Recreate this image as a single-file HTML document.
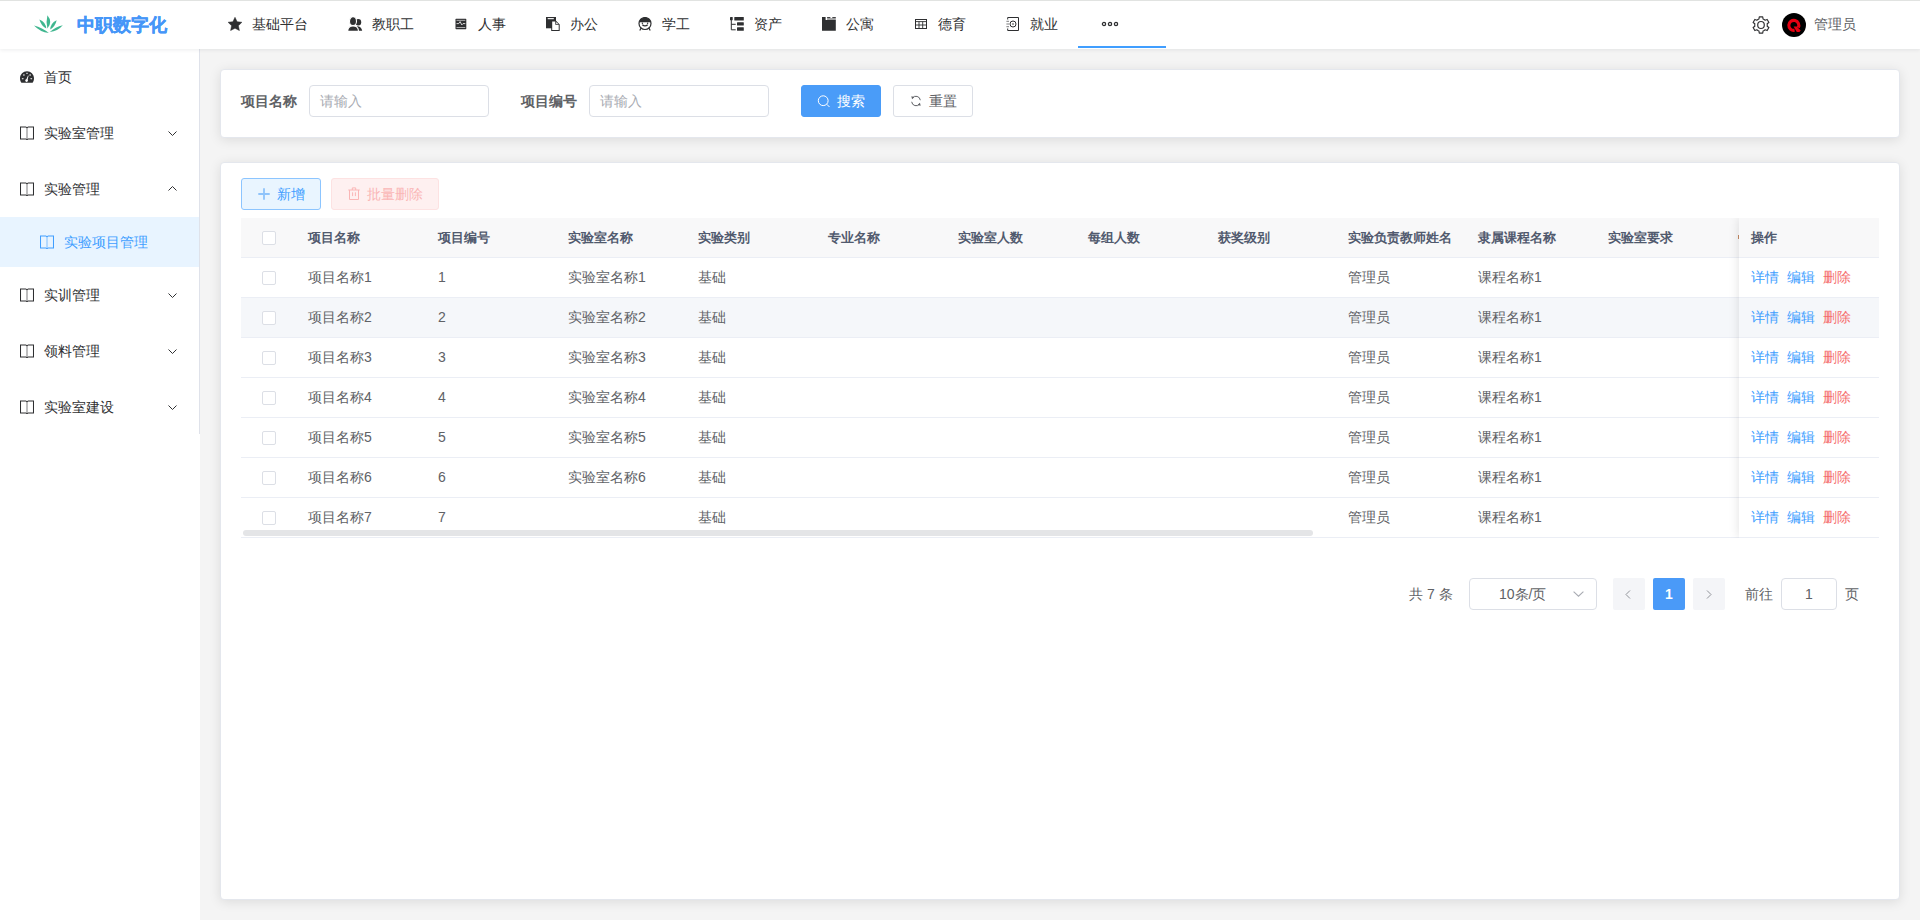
<!DOCTYPE html><html><head><meta charset="utf-8"><style>
*{box-sizing:border-box;margin:0;padding:0}
html,body{width:1920px;height:920px;overflow:hidden;background:#fff;font-family:"Liberation Sans",sans-serif;font-size:14px;color:#606266}
.abs{position:absolute}
.t{position:absolute;white-space:nowrap;line-height:20px}
#top{position:absolute;left:0;top:0;width:1920px;height:49px;background:#fff;border-top:1px solid #e1e3e1;box-shadow:0 1px 4px rgba(0,21,41,.08);z-index:5}
#side{position:absolute;left:0;top:49px;width:200px;height:871px;background:#fff;z-index:3}
#main{position:absolute;left:200px;top:49px;width:1720px;height:871px;background:#f4f4f4}
.card{position:absolute;background:#fff;border:1px solid #e4e7ed;border-radius:4px;box-shadow:0 2px 12px 0 rgba(0,0,0,.1)}
.inp{position:absolute;height:32px;border:1px solid #dcdfe6;border-radius:4px;background:#fff}
.btn{position:absolute;height:32px;border-radius:3px;border:1px solid #dcdfe6;background:#fff}
.th{position:absolute;font-size:13px;font-weight:bold;color:#515a6e;white-space:nowrap;line-height:20px}
.td{position:absolute;font-size:14px;color:#606266;white-space:nowrap;line-height:20px}
.cb{position:absolute;width:14px;height:14px;border:1px solid #dcdfe6;border-radius:2px;background:#fff}
.lnk{position:absolute;font-size:14px;white-space:nowrap;line-height:20px}
</style></head><body>
<div id="top">
<svg class="abs" style="left:0;top:-1px" width="80" height="49" viewBox="0 0 80 49"><g fill="#3fb68f"><path d="M47.40 28.60Q53.00 21.95 47.40 15.30Q45.80 21.95 47.40 28.60z"/><path d="M46.30 28.60Q45.73 21.84 39.40 19.40Q40.93 25.44 46.30 28.60z"/><path d="M50.20 29.60Q55.34 26.21 56.70 20.20Q50.57 22.91 50.20 29.60z"/><path d="M48.80 33.00Q42.31 27.42 34.00 25.40Q40.03 31.87 48.80 33.00z"/><path d="M49.80 32.00Q57.69 31.26 62.80 25.20Q55.37 26.83 49.80 32.00z"/></g></svg>
<div class="t" style="left:77px;top:13px;font-size:18px;font-weight:bold;color:#4596f8;line-height:22px;-webkit-text-stroke:0.35px #4596f8">中职数字化</div>
<svg class="abs" style="left:228px;top:16px" width="14" height="14" viewBox="0 0 14 14"><path fill="#2e2f31" stroke="#2e2f31" stroke-width="0.5" stroke-linejoin="round" d="M7.00 0.3L9.12 4.69L13.9 5.25L10.42 8.71L11.4 13.6L7.00 11.20L2.6 13.6L3.58 8.71L0.1 5.25L4.88 4.69z"/></svg>
<div class="t" style="left:252px;top:13px;color:#303133">基础平台</div>
<svg class="abs" style="left:348px;top:16px" width="15" height="14" viewBox="0 0 15 14"><g fill="#2e2f31"><ellipse cx="10.3" cy="5.2" rx="2.9" ry="3.3"/><path d="M9 9.2c3 0 4.8 1.8 5.2 4.6H10z"/></g><g fill="#2e2f31" stroke="#fff" stroke-width="1.1"><ellipse cx="5" cy="4.2" rx="3.5" ry="4.4"/><path d="M-0.3 14.4c0-3.4 1.9-5.4 5.3-5.4s5.5 2 5.5 5.4z"/></g></svg>
<div class="t" style="left:372px;top:13px;color:#303133">教职工</div>
<svg class="abs" style="left:455px;top:17px" width="12" height="12" viewBox="0 0 12 12"><rect x="0.5" y="0.8" width="10.8" height="10.4" rx="0.6" fill="#2e2f31"/><rect x="1.5" y="1.9" width="8.8" height="0.7" fill="#fff" opacity=".85"/><rect x="1.5" y="9.3" width="8.8" height="0.7" fill="#fff" opacity=".85"/><path d="M1.5 5.6h2.2l1.4-2 1.7 3.3 1.2-1.3h2.3" stroke="#fff" stroke-width="0.8" fill="none"/></svg>
<div class="t" style="left:478px;top:13px;color:#303133">人事</div>
<svg class="abs" style="left:546px;top:16px" width="14" height="14" viewBox="0 0 14 14"><path fill="#2e2f31" d="M0 0h10v11.3H0z"/><rect x="1.7" y="1.1" width="6.1" height="1.1" fill="#fff"/><path d="M5.2 3.6h4.6l3.9 3.9v6.4H5.2z" fill="#2e2f31"/><path d="M6.2 4.6h3.1v3.1h3.4v5.2H6.2z" fill="#fff"/><path d="M10.2 5.1l2 2h-2z" fill="#fff"/></svg>
<div class="t" style="left:570px;top:13px;color:#303133">办公</div>
<svg class="abs" style="left:638px;top:16px" width="14" height="14" viewBox="0 0 14 14"><g fill="none" stroke="#2e2f31" stroke-width="1.2"><circle cx="7" cy="6.5" rx="6" r="6"/><path d="M4.3 7.8c1.6 1.3 3.8 1.3 5.4 0"/><path d="M3.2 10.8L1.8 13.5M10.8 10.8l1.4 2.7"/></g><path d="M1.2 5.2a6 6 0 0 1 11.6 0z" fill="#2e2f31"/><circle cx="4.4" cy="6.2" r="0.7" fill="#2e2f31"/><circle cx="9.6" cy="6.2" r="0.7" fill="#2e2f31"/></svg>
<div class="t" style="left:662px;top:13px;color:#303133">学工</div>
<svg class="abs" style="left:730px;top:16px" width="14" height="14" viewBox="0 0 14 14"><g fill="#2e2f31"><rect x="0" y="0" width="2.7" height="3.3" rx="0.6"/><rect x="4.3" y="0.1" width="9.5" height="3.4" rx="0.5"/><rect x="7" y="5.2" width="6.8" height="3.3" rx="0.5"/><rect x="7" y="10.3" width="6.8" height="3.4" rx="0.5"/></g><path d="M1.3 3v9.8h4.4M1.3 7.3h4.4" stroke="#2e2f31" stroke-width="1" fill="none"/></svg>
<div class="t" style="left:754px;top:13px;color:#303133">资产</div>
<svg class="abs" style="left:822px;top:16px" width="14" height="14" viewBox="0 0 14 14"><path fill="#2e2f31" d="M0 0.1h3.6v3h10.2v10.6H0z"/><rect x="5.1" y="0.1" width="3.3" height="1" fill="#2e2f31"/><rect x="10.3" y="0.1" width="3.5" height="1" fill="#2e2f31"/><rect x="5.1" y="1.1" width="8.7" height="2" fill="#2e2f31" opacity=".45"/></svg>
<div class="t" style="left:846px;top:13px;color:#303133">公寓</div>
<svg class="abs" style="left:915px;top:18px" width="12" height="10" viewBox="0 0 12 10"><g fill="none" stroke="#2e2f31" stroke-width="1"><rect x="0.5" y="0.5" width="11" height="9"/><path d="M0.5 2.6h11M0.5 6h11M4 2.6v7M7.7 2.6v7" stroke-width="0.9"/></g></svg>
<div class="t" style="left:938px;top:13px;color:#303133">德育</div>
<svg class="abs" style="left:1006px;top:16px" width="14" height="14" viewBox="0 0 14 14"><g fill="none" stroke="#2e2f31" stroke-width="1"><path d="M1.7 2.5V0.5h10.8v13H1.7v-2"/><circle cx="7" cy="7" r="3"/><path d="M0.4 4.3h2.6M0.4 7h2.6M0.4 9.7h2.6" stroke-width="0.9" opacity=".7"/></g><circle cx="7" cy="7" r="1" fill="#2e2f31" opacity=".6"/></svg>
<div class="t" style="left:1030px;top:13px;color:#303133">就业</div>
<svg class="abs" style="left:1101px;top:20px" width="18" height="6" viewBox="0 0 18 6"><g fill="none" stroke="#2e2f31" stroke-width="1.3"><circle cx="3" cy="3" r="1.6"/><circle cx="9" cy="3" r="1.6"/><circle cx="15" cy="3" r="1.6"/></g></svg>
<div class="abs" style="left:1078px;top:45px;width:88px;height:2px;background:#409eff"></div>
<svg class="abs" style="left:1752px;top:15px" width="18" height="18" viewBox="0 0 18 18"><path fill="none" stroke="#303133" stroke-width="1.15" stroke-linejoin="round" d="M5.85 3.54L6.95 3.04L7.27 0.88L10.73 0.88L11.05 3.04L12.15 3.54L13.13 4.25L15.17 3.45L16.89 6.44L15.18 7.80L15.30 9.00L15.18 10.20L16.89 11.56L15.17 14.55L13.13 13.75L12.15 14.46L11.05 14.96L10.73 17.12L7.27 17.12L6.95 14.96L5.85 14.46L4.87 13.75L2.83 14.55L1.11 11.56L2.82 10.20L2.70 9.00L2.82 7.80L1.11 6.44L2.83 3.45L4.87 4.25z"/><ellipse cx="9" cy="9" rx="3.3" ry="3.5" fill="none" stroke="#303133" stroke-width="1.2"/></svg>
<svg class="abs" style="left:1782px;top:12px" width="24" height="24" viewBox="0 0 24 24"><circle cx="12" cy="12" r="12" fill="#000"/><path d="M16.3 14.6A5 5 0 1 0 12.6 17.3" fill="none" stroke="#e60012" stroke-width="3.1"/><path d="M11.6 13.6h3.2l3.9 4-1.3 1.4h-2.6z" fill="#e60012"/></svg>
<div class="t" style="left:1814px;top:13px;color:#606266">管理员</div>
</div>
<div id="side">
<div class="abs" style="left:199px;top:0;width:1px;height:385px;background:#dfe2ea"></div>
<svg class="abs" style="left:20px;top:22px" width="14" height="12" viewBox="0 0 14 12"><path fill="#2e2f31" d="M7 0.2C3.2 0.2 0 3.4 0 7.3c0 1.7 0.5 3.2 1.4 4.5h11.2c0.9-1.3 1.4-2.8 1.4-4.5C14 3.4 10.8 0.2 7 0.2z"/><g fill="#fff"><rect x="6.2" y="1.8" width="1.6" height="1" rx=".4"/><circle cx="3.9" cy="4" r=".8"/><circle cx="10.1" cy="4" r=".8"/><rect x="1.8" y="7.2" width="1.8" height="1" rx=".4"/><rect x="10.4" y="7.2" width="1.8" height="1" rx=".4"/><circle cx="6.6" cy="9.6" r="1.3"/><path d="M6 9.3l2-4.8 0.6 0.2-1.3 5z"/></g></svg>
<div class="t" style="left:44px;top:18px;color:#303133">首页</div>
<svg class="abs" style="left:20px;top:77px" width="14" height="14" viewBox="0 0 14 14"><g fill="none" stroke="#2e2f31" stroke-width="1.05"><path d="M0.5 0.9h5.2l1.3 0.8 1.3-0.8h5.2v12H8.3l-1.3 0.7-1.3-0.7H0.5z"/><path d="M7 1.6v11.6" opacity=".6"/></g></svg>
<div class="t" style="left:44px;top:74px;color:#303133">实验室管理</div>
<svg class="abs" style="left:168px;top:82px" width="9" height="5" viewBox="0 0 9 5"><path d="M0.5 0.5L4.5 4.5 8.5 0.5" fill="none" stroke="#303133" stroke-width="1"/></svg>
<svg class="abs" style="left:20px;top:133px" width="14" height="14" viewBox="0 0 14 14"><g fill="none" stroke="#2e2f31" stroke-width="1.05"><path d="M0.5 0.9h5.2l1.3 0.8 1.3-0.8h5.2v12H8.3l-1.3 0.7-1.3-0.7H0.5z"/><path d="M7 1.6v11.6" opacity=".6"/></g></svg>
<div class="t" style="left:44px;top:130px;color:#303133">实验管理</div>
<svg class="abs" style="left:168px;top:137px" width="9" height="5" viewBox="0 0 9 5"><path d="M0.5 4.5L4.5 0.5 8.5 4.5" fill="none" stroke="#303133" stroke-width="1"/></svg>
<div class="abs" style="left:0;top:168px;width:199px;height:50px;background:#e8f4ff"></div>
<svg class="abs" style="left:40px;top:186px" width="14" height="14" viewBox="0 0 14 14"><g fill="none" stroke="#409eff" stroke-width="1.05"><path d="M0.5 0.9h5.2l1.3 0.8 1.3-0.8h5.2v12H8.3l-1.3 0.7-1.3-0.7H0.5z"/><path d="M7 1.6v11.6" opacity=".6"/></g></svg>
<div class="t" style="left:64px;top:183px;color:#409eff">实验项目管理</div>
<svg class="abs" style="left:20px;top:239px" width="14" height="14" viewBox="0 0 14 14"><g fill="none" stroke="#2e2f31" stroke-width="1.05"><path d="M0.5 0.9h5.2l1.3 0.8 1.3-0.8h5.2v12H8.3l-1.3 0.7-1.3-0.7H0.5z"/><path d="M7 1.6v11.6" opacity=".6"/></g></svg>
<div class="t" style="left:44px;top:236px;color:#303133">实训管理</div>
<svg class="abs" style="left:168px;top:244px" width="9" height="5" viewBox="0 0 9 5"><path d="M0.5 0.5L4.5 4.5 8.5 0.5" fill="none" stroke="#303133" stroke-width="1"/></svg>
<svg class="abs" style="left:20px;top:295px" width="14" height="14" viewBox="0 0 14 14"><g fill="none" stroke="#2e2f31" stroke-width="1.05"><path d="M0.5 0.9h5.2l1.3 0.8 1.3-0.8h5.2v12H8.3l-1.3 0.7-1.3-0.7H0.5z"/><path d="M7 1.6v11.6" opacity=".6"/></g></svg>
<div class="t" style="left:44px;top:292px;color:#303133">领料管理</div>
<svg class="abs" style="left:168px;top:300px" width="9" height="5" viewBox="0 0 9 5"><path d="M0.5 0.5L4.5 4.5 8.5 0.5" fill="none" stroke="#303133" stroke-width="1"/></svg>
<svg class="abs" style="left:20px;top:351px" width="14" height="14" viewBox="0 0 14 14"><g fill="none" stroke="#2e2f31" stroke-width="1.05"><path d="M0.5 0.9h5.2l1.3 0.8 1.3-0.8h5.2v12H8.3l-1.3 0.7-1.3-0.7H0.5z"/><path d="M7 1.6v11.6" opacity=".6"/></g></svg>
<div class="t" style="left:44px;top:348px;color:#303133">实验室建设</div>
<svg class="abs" style="left:168px;top:356px" width="9" height="5" viewBox="0 0 9 5"><path d="M0.5 0.5L4.5 4.5 8.5 0.5" fill="none" stroke="#303133" stroke-width="1"/></svg>
</div>
<div id="main">
<div class="card" style="left:20px;top:20px;width:1680px;height:69px"></div>
<div class="card" style="left:20px;top:113px;width:1680px;height:738px"></div>
</div>
<div class="abs" style="left:0;top:0;width:1920px;height:920px;z-index:4;pointer-events:none">
<div class="t" style="left:241px;top:91px;font-weight:bold;color:#606266">项目名称</div>
<div class="inp" style="left:309px;top:85px;width:180px"></div>
<div class="t" style="left:320px;top:91px;color:#a8abb2">请输入</div>
<div class="t" style="left:521px;top:91px;font-weight:bold;color:#606266">项目编号</div>
<div class="inp" style="left:589px;top:85px;width:180px"></div>
<div class="t" style="left:600px;top:91px;color:#a8abb2">请输入</div>
<div class="btn" style="left:801px;top:85px;width:80px;background:#4a9cf8;border-color:#4a9cf8"></div>
<svg class="abs" style="left:817px;top:94px" width="14" height="14" viewBox="0 0 14 14"><circle cx="6.2" cy="6.7" r="4.9" fill="none" stroke="#fff" stroke-width="1"/><path d="M9.7 10.2l2.8 2.8" stroke="#fff" stroke-width="1"/></svg>
<div class="t" style="left:837px;top:91px;color:#fff">搜索</div>
<div class="btn" style="left:893px;top:85px;width:80px"></div>
<svg class="abs" style="left:910px;top:95px" width="12" height="12" viewBox="0 0 12 12"><g fill="none" stroke="#606266" stroke-width="1"><path d="M10.3 5.2A4.4 4.4 0 0 0 2.4 3"/><path d="M1.7 6.8A4.4 4.4 0 0 0 9.6 9"/></g><path d="M1.3 1.2l3.1 0.9-2.3 2.1z" fill="#606266"/><path d="M10.7 10.8l-3.1-0.9 2.3-2.1z" fill="#606266"/></svg>
<div class="t" style="left:929px;top:91px;color:#606266">重置</div>
<div class="btn" style="left:241px;top:178px;width:80px;background:#e9f5ff;border-color:#8cc5ff"></div>
<svg class="abs" style="left:258px;top:188px" width="12" height="12" viewBox="0 0 12 12"><path d="M6 0.3v11.4M0.3 6h11.4" stroke="#8fc4fb" stroke-width="1.8"/></svg>
<div class="t" style="left:277px;top:184px;color:#409eff">新增</div>
<div class="btn" style="left:331px;top:178px;width:108px;background:#fef0f0;border-color:#fde2e2"></div>
<svg class="abs" style="left:348px;top:187px" width="12" height="13" viewBox="0 0 12 13"><g fill="none" stroke="#fab6b6" stroke-width="1"><path d="M0.3 3h11.4"/><path d="M4.3 3V0.9h3.4V3"/><path d="M1.5 3v9.5h9V3"/><path d="M4.6 5.3v3.8M7.4 5.3v3.8"/></g></svg>
<div class="t" style="left:367px;top:184px;color:#fab6b6">批量删除</div>
<div class="abs" style="left:241px;top:218px;width:1638px;height:40px;background:#f8f8f9"></div>
<div class="abs" style="left:241px;top:257px;width:1638px;height:1px;background:#ebeef5"></div>
<div class="abs" style="left:241px;top:297px;width:1638px;height:1px;background:#ebeef5"></div>
<div class="abs" style="left:241px;top:337px;width:1638px;height:1px;background:#ebeef5"></div>
<div class="abs" style="left:241px;top:377px;width:1638px;height:1px;background:#ebeef5"></div>
<div class="abs" style="left:241px;top:417px;width:1638px;height:1px;background:#ebeef5"></div>
<div class="abs" style="left:241px;top:457px;width:1638px;height:1px;background:#ebeef5"></div>
<div class="abs" style="left:241px;top:497px;width:1638px;height:1px;background:#ebeef5"></div>
<div class="abs" style="left:241px;top:537px;width:1638px;height:1px;background:#ebeef5"></div>
<div class="abs" style="left:241px;top:298px;width:1638px;height:39px;background:#f5f7fa"></div>
<div class="cb" style="left:262px;top:231px"></div>
<div class="th" style="left:308px;top:228px">项目名称</div>
<div class="th" style="left:438px;top:228px">项目编号</div>
<div class="th" style="left:568px;top:228px">实验室名称</div>
<div class="th" style="left:698px;top:228px">实验类别</div>
<div class="th" style="left:828px;top:228px">专业名称</div>
<div class="th" style="left:958px;top:228px">实验室人数</div>
<div class="th" style="left:1088px;top:228px">每组人数</div>
<div class="th" style="left:1218px;top:228px">获奖级别</div>
<div class="th" style="left:1348px;top:228px">实验负责教师姓名</div>
<div class="th" style="left:1478px;top:228px">隶属课程名称</div>
<div class="th" style="left:1608px;top:228px">实验室要求</div>
<div class="cb" style="left:262px;top:271px"></div>
<div class="td" style="left:308px;top:267px">项目名称1</div>
<div class="td" style="left:438px;top:267px">1</div>
<div class="td" style="left:568px;top:267px">实验室名称1</div>
<div class="td" style="left:698px;top:267px">基础</div>
<div class="td" style="left:1348px;top:267px">管理员</div>
<div class="td" style="left:1478px;top:267px">课程名称1</div>
<div class="cb" style="left:262px;top:311px"></div>
<div class="td" style="left:308px;top:307px">项目名称2</div>
<div class="td" style="left:438px;top:307px">2</div>
<div class="td" style="left:568px;top:307px">实验室名称2</div>
<div class="td" style="left:698px;top:307px">基础</div>
<div class="td" style="left:1348px;top:307px">管理员</div>
<div class="td" style="left:1478px;top:307px">课程名称1</div>
<div class="cb" style="left:262px;top:351px"></div>
<div class="td" style="left:308px;top:347px">项目名称3</div>
<div class="td" style="left:438px;top:347px">3</div>
<div class="td" style="left:568px;top:347px">实验室名称3</div>
<div class="td" style="left:698px;top:347px">基础</div>
<div class="td" style="left:1348px;top:347px">管理员</div>
<div class="td" style="left:1478px;top:347px">课程名称1</div>
<div class="cb" style="left:262px;top:391px"></div>
<div class="td" style="left:308px;top:387px">项目名称4</div>
<div class="td" style="left:438px;top:387px">4</div>
<div class="td" style="left:568px;top:387px">实验室名称4</div>
<div class="td" style="left:698px;top:387px">基础</div>
<div class="td" style="left:1348px;top:387px">管理员</div>
<div class="td" style="left:1478px;top:387px">课程名称1</div>
<div class="cb" style="left:262px;top:431px"></div>
<div class="td" style="left:308px;top:427px">项目名称5</div>
<div class="td" style="left:438px;top:427px">5</div>
<div class="td" style="left:568px;top:427px">实验室名称5</div>
<div class="td" style="left:698px;top:427px">基础</div>
<div class="td" style="left:1348px;top:427px">管理员</div>
<div class="td" style="left:1478px;top:427px">课程名称1</div>
<div class="cb" style="left:262px;top:471px"></div>
<div class="td" style="left:308px;top:467px">项目名称6</div>
<div class="td" style="left:438px;top:467px">6</div>
<div class="td" style="left:568px;top:467px">实验室名称6</div>
<div class="td" style="left:698px;top:467px">基础</div>
<div class="td" style="left:1348px;top:467px">管理员</div>
<div class="td" style="left:1478px;top:467px">课程名称1</div>
<div class="cb" style="left:262px;top:511px"></div>
<div class="td" style="left:308px;top:507px">项目名称7</div>
<div class="td" style="left:438px;top:507px">7</div>
<div class="td" style="left:698px;top:507px">基础</div>
<div class="td" style="left:1348px;top:507px">管理员</div>
<div class="td" style="left:1478px;top:507px">课程名称1</div>
<div class="abs" style="left:243px;top:530px;width:1070px;height:6px;border-radius:3px;background:#e4e5e7"></div>
<div class="abs" style="left:1709px;top:218px;width:170px;height:320px;overflow:hidden"><div class="abs" style="left:30px;top:0;width:160px;height:320px;box-shadow:0 0 10px rgba(0,0,0,.12);background:#fff"></div></div>
<div class="abs" style="left:1739px;top:218px;width:140px;height:320px;background:#fff;overflow:hidden">
<div class="abs" style="left:0;top:0;width:140px;height:40px;background:#f8f8f9"></div>
<div class="abs" style="left:0;top:80px;width:140px;height:39px;background:#f5f7fa"></div>
<div class="abs" style="left:0;top:39px;width:140px;height:1px;background:#ebeef5"></div>
<div class="abs" style="left:0;top:79px;width:140px;height:1px;background:#ebeef5"></div>
<div class="abs" style="left:0;top:119px;width:140px;height:1px;background:#ebeef5"></div>
<div class="abs" style="left:0;top:159px;width:140px;height:1px;background:#ebeef5"></div>
<div class="abs" style="left:0;top:199px;width:140px;height:1px;background:#ebeef5"></div>
<div class="abs" style="left:0;top:239px;width:140px;height:1px;background:#ebeef5"></div>
<div class="abs" style="left:0;top:279px;width:140px;height:1px;background:#ebeef5"></div>
<div class="abs" style="left:0;top:319px;width:140px;height:1px;background:#ebeef5"></div>
<div class="th" style="left:12px;top:10px">操作</div>
<div class="lnk" style="left:12px;top:49px;color:#409eff">详情</div>
<div class="lnk" style="left:48px;top:49px;color:#409eff">编辑</div>
<div class="lnk" style="left:84px;top:49px;color:#f56c6c">删除</div>
<div class="lnk" style="left:12px;top:89px;color:#409eff">详情</div>
<div class="lnk" style="left:48px;top:89px;color:#409eff">编辑</div>
<div class="lnk" style="left:84px;top:89px;color:#f56c6c">删除</div>
<div class="lnk" style="left:12px;top:129px;color:#409eff">详情</div>
<div class="lnk" style="left:48px;top:129px;color:#409eff">编辑</div>
<div class="lnk" style="left:84px;top:129px;color:#f56c6c">删除</div>
<div class="lnk" style="left:12px;top:169px;color:#409eff">详情</div>
<div class="lnk" style="left:48px;top:169px;color:#409eff">编辑</div>
<div class="lnk" style="left:84px;top:169px;color:#f56c6c">删除</div>
<div class="lnk" style="left:12px;top:209px;color:#409eff">详情</div>
<div class="lnk" style="left:48px;top:209px;color:#409eff">编辑</div>
<div class="lnk" style="left:84px;top:209px;color:#f56c6c">删除</div>
<div class="lnk" style="left:12px;top:249px;color:#409eff">详情</div>
<div class="lnk" style="left:48px;top:249px;color:#409eff">编辑</div>
<div class="lnk" style="left:84px;top:249px;color:#f56c6c">删除</div>
<div class="lnk" style="left:12px;top:289px;color:#409eff">详情</div>
<div class="lnk" style="left:48px;top:289px;color:#409eff">编辑</div>
<div class="lnk" style="left:84px;top:289px;color:#f56c6c">删除</div>
</div>
<div class="abs" style="left:1738px;top:235px;width:1px;height:4px;background:#b9825e"></div>
<div class="t" style="left:1409px;top:584px;color:#606266;font-size:14px">共 7 条</div>
<div class="inp" style="left:1469px;top:578px;width:128px"></div>
<div class="t" style="left:1499px;top:584px;color:#606266">10条/页</div>
<svg class="abs" style="left:1573px;top:591px" width="11" height="6" viewBox="0 0 11 6"><path d="M0.6 0.6L5.5 5.2 10.4 0.6" fill="none" stroke="#a8abb2" stroke-width="1.1"/></svg>
<div class="abs" style="left:1613px;top:578px;width:32px;height:32px;border-radius:2px;background:#f4f5f8"></div>
<svg class="abs" style="left:1625px;top:590px" width="6" height="9" viewBox="0 0 6 9"><path d="M5 0.5L1 4.5 5 8.5" fill="none" stroke="#909399" stroke-width="1"/></svg>
<div class="abs" style="left:1653px;top:578px;width:32px;height:32px;border-radius:2px;background:#4a9af8"></div>
<div class="t" style="left:1653px;top:584px;width:32px;text-align:center;color:#fff;font-weight:bold">1</div>
<div class="abs" style="left:1693px;top:578px;width:32px;height:32px;border-radius:2px;background:#f4f5f8"></div>
<svg class="abs" style="left:1706px;top:590px" width="6" height="9" viewBox="0 0 6 9"><path d="M1 0.5L5 4.5 1 8.5" fill="none" stroke="#909399" stroke-width="1"/></svg>
<div class="t" style="left:1745px;top:584px;color:#606266">前往</div>
<div class="inp" style="left:1781px;top:578px;width:56px"></div>
<div class="t" style="left:1781px;top:584px;width:56px;text-align:center;color:#606266">1</div>
<div class="t" style="left:1845px;top:584px;color:#606266">页</div>
</div>
</body></html>
